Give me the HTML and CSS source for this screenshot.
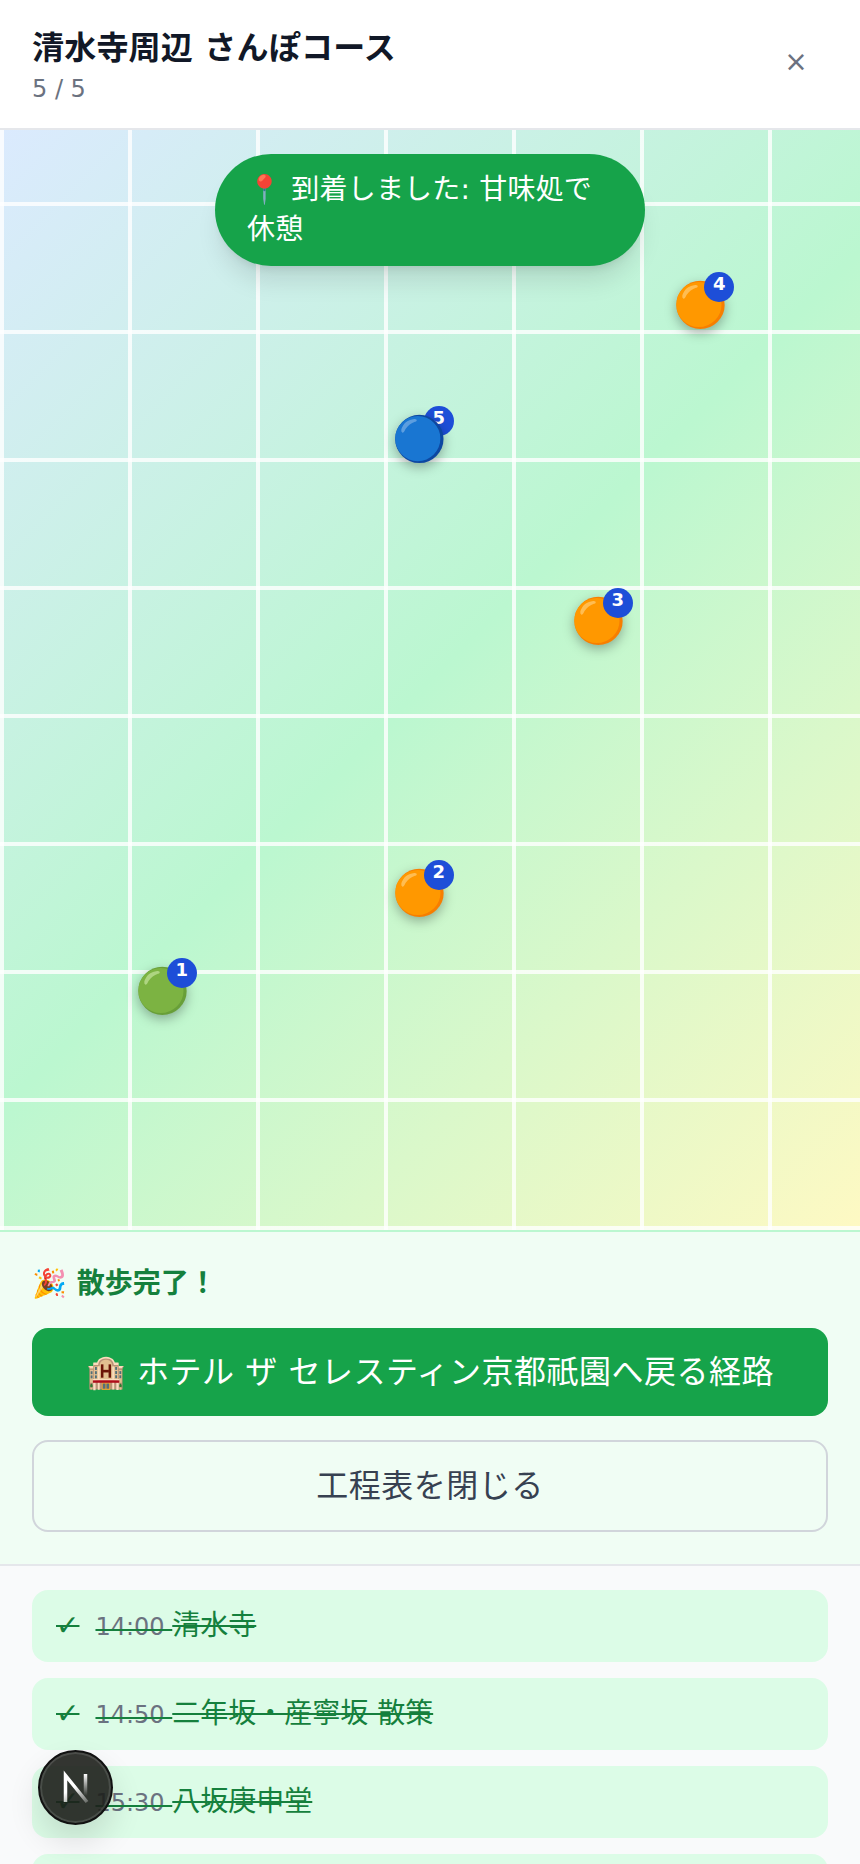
FILE: index.html
```html
<!DOCTYPE html>
<html lang="ja">
<head>
    <meta charset="UTF-8">
    <meta name="viewport" content="width=device-width, initial-scale=1.0">
    <title>清水寺周辺 さんぽコース</title>
    <link rel="stylesheet" href="styles.css">
</head>
<body>
    <div class="app">
        <!-- Header -->
        <header class="header">
            <div>
                <h1 class="title">清水寺周辺 さんぽコース</h1>
                <p class="progress">5 / 5</p>
            </div>
            <button class="close-btn" type="button">×</button>
        </header>

        <!-- Map -->
        <section class="map">
            <div class="toast">📍 到着しました: 甘味処で休憩</div>

            <div class="pin" style="left: 18.8%; top: 78.27%">
                <span class="pin-emoji">🟢</span><span class="pin-num">1</span>
            </div>
            <div class="pin" style="left: 48.7%; top: 69.4%">
                <span class="pin-emoji">🟠</span><span class="pin-num">2</span>
            </div>
            <div class="pin" style="left: 69.5%; top: 44.6%">
                <span class="pin-emoji">🟠</span><span class="pin-num">3</span>
            </div>
            <div class="pin" style="left: 81.3%; top: 15.9%">
                <span class="pin-emoji">🟠</span><span class="pin-num">4</span>
            </div>
            <div class="pin pin-current" style="left: 48.7%; top: 28.1%">
                <span class="pin-emoji">🔵</span><span class="pin-num">5</span>
            </div>
        </section>

        <!-- Finished panel -->
        <section class="done">
            <p class="done-title">🎉 散歩完了！</p>
            <button class="btn btn-primary" type="button">🏨 ホテル ザ セレスティン京都祇園へ戻る経路</button>
            <button class="btn btn-outline" type="button">工程表を閉じる</button>
        </section>

        <!-- Stops -->
        <ul class="stops">
            <li class="stop"><span>✓</span><span><span class="stop-time">14:00 </span>清水寺</span></li>
            <li class="stop"><span>✓</span><span><span class="stop-time">14:50 </span>二年坂・産寧坂 散策</span></li>
            <li class="stop"><span>✓</span><span><span class="stop-time">15:30 </span>八坂庚申堂</span></li>
            <li class="stop"></li>
        </ul>
    </div>

    <!-- Dev badge -->
    <div class="dev-badge">
        <svg width="44" height="44" viewBox="0 0 44 44" fill="none">
            <defs>
                <linearGradient id="fadeA" gradientUnits="userSpaceOnUse" x1="22" y1="20" x2="32" y2="36">
                    <stop offset="0" stop-color="#fff"/>
                    <stop offset="1" stop-color="#fff" stop-opacity="0.3"/>
                </linearGradient>
                <linearGradient id="fadeB" gradientUnits="userSpaceOnUse" x1="31" y1="8" x2="31" y2="30">
                    <stop offset="0" stop-color="#fff"/>
                    <stop offset="1" stop-color="#fff" stop-opacity="0"/>
                </linearGradient>
            </defs>
            <path d="M11.5 36V9.5L33 36" stroke="url(#fadeA)" stroke-width="3.5"/>
            <path d="M31.5 8V30" stroke="url(#fadeB)" stroke-width="3.5"/>
        </svg>
    </div>
</body>
</html>
```

FILE: styles.css
```css
/* General */
html, body {
    margin: 0;
    height: 100%;
    overflow: hidden;
}

body {
    font-family: "DejaVu Sans", "Noto Sans CJK JP", sans-serif;
    background-color: #ffffff;
    color: #1f2937;
}

.app {
    display: flex;
    flex-direction: column;
    height: 100vh;
    overflow: hidden;
}

/* Header */
.header {
    flex: none;
    height: 128px;
    box-sizing: content-box;
    display: flex;
    align-items: center;
    justify-content: space-between;
    padding: 0 32px;
    border-bottom: 2px solid #e5e7eb;
}

.title {
    margin: 4px 0 0;
    font-size: 32px;
    line-height: 40px;
    font-weight: 700;
    letter-spacing: 0.2px;
    color: #111827;
}

.progress {
    margin: 5px 0 0;
    font-size: 24px;
    line-height: 32px;
    color: #6b7280;
}

.close-btn {
    width: 64px;
    height: 64px;
    margin-bottom: 4px;
    padding: 0;
    border: none;
    background: none;
    font-family: inherit;
    font-size: 28px;
    line-height: 1;
    color: #6b7280;
}

/* Map */
.map {
    flex: none;
    position: relative;
    height: 1100px;
    background-image:
        linear-gradient(rgba(255, 255, 255, 0.8) 4px, transparent 4px),
        linear-gradient(90deg, rgba(255, 255, 255, 0.8) 4px, transparent 4px),
        linear-gradient(135deg, #dbeafe 0%, #bbf7d0 50%, #fef9c3 100%);
    background-size: 128px 128px, 128px 128px, 100% 100%;
    background-position: 0 72px, 0 0, 0 0;
}

.toast {
    position: absolute;
    top: 24px;
    left: 50%;
    transform: translateX(-50%);
    z-index: 5;
    padding: 16px 32px;
    border-radius: 9999px;
    background-color: #16a34a;
    color: #ffffff;
    font-size: 28px;
    line-height: 40px;
    letter-spacing: 0.2px;
    box-shadow: 0 20px 25px -5px rgba(0, 0, 0, 0.1), 0 8px 10px -6px rgba(0, 0, 0, 0.1);
}

/* Pins */
.pin {
    position: absolute;
    width: 48px;
    height: 48px;
    transform: translate(-50%, -50%);
}

.pin-emoji {
    position: absolute;
    left: 50%;
    top: 50%;
    transform: translate(calc(-50% + 1px), -50%);
    font-size: 44px;
    line-height: 1;
    filter: drop-shadow(0 4px 6px rgba(0, 0, 0, 0.3));
}

.pin-num {
    position: absolute;
    left: 29px;
    top: -9px;
    width: 30px;
    height: 30px;
    border-radius: 50%;
    background-color: #1d4ed8;
    color: #ffffff;
    font-size: 18px;
    font-weight: 700;
    line-height: 24px;
    text-align: center;
}

.pin-current .pin-num {
    z-index: -1;
}

/* Finished panel */
.done {
    flex: none;
    display: flex;
    flex-direction: column;
    gap: 24px;
    padding: 32px;
    background-color: #f0fdf4;
    border-top: 2px solid #bbf7d0;
    border-bottom: 2px solid #e5e7eb;
}

.done-title {
    margin: 0;
    font-size: 28px;
    line-height: 40px;
    font-weight: 700;
    color: #15803d;
}

.btn {
    display: block;
    width: 100%;
    padding: 24px;
    border-radius: 16px;
    font-family: inherit;
    font-size: 32px;
    line-height: 40px;
    letter-spacing: 0.5px;
}

.btn-primary {
    border: none;
    background-color: #16a34a;
    color: #ffffff;
}

.btn-outline {
    border: 2px solid #d1d5db;
    background: none;
    color: #374151;
}

/* Stops */
.stops {
    flex: none;
    display: flex;
    flex-direction: column;
    gap: 16px;
    margin: 0;
    padding: 24px 32px;
    list-style: none;
    background-color: #f9fafb;
}

.stop {
    display: flex;
    gap: 16px;
    min-height: 40px;
    padding: 16px 24px;
    border-radius: 16px;
    background-color: #dcfce7;
    color: #15803d;
    font-size: 28px;
    line-height: 40px;
    text-decoration: line-through;
}

.stop-time {
    font-size: 24px;
    line-height: 1;
    color: #6b7280;
}

/* Dev badge */
.dev-badge {
    position: fixed;
    left: 38px;
    bottom: 39px;
    z-index: 10;
    display: flex;
    align-items: center;
    justify-content: center;
    width: 71px;
    height: 71px;
    border: 2px solid #111111;
    border-radius: 50%;
    background-color: rgba(29, 31, 27, 0.9);
    box-shadow: inset 0 0 0 2px rgba(255, 255, 255, 0.12), 0 16px 32px rgba(0, 0, 0, 0.12);
}
```
